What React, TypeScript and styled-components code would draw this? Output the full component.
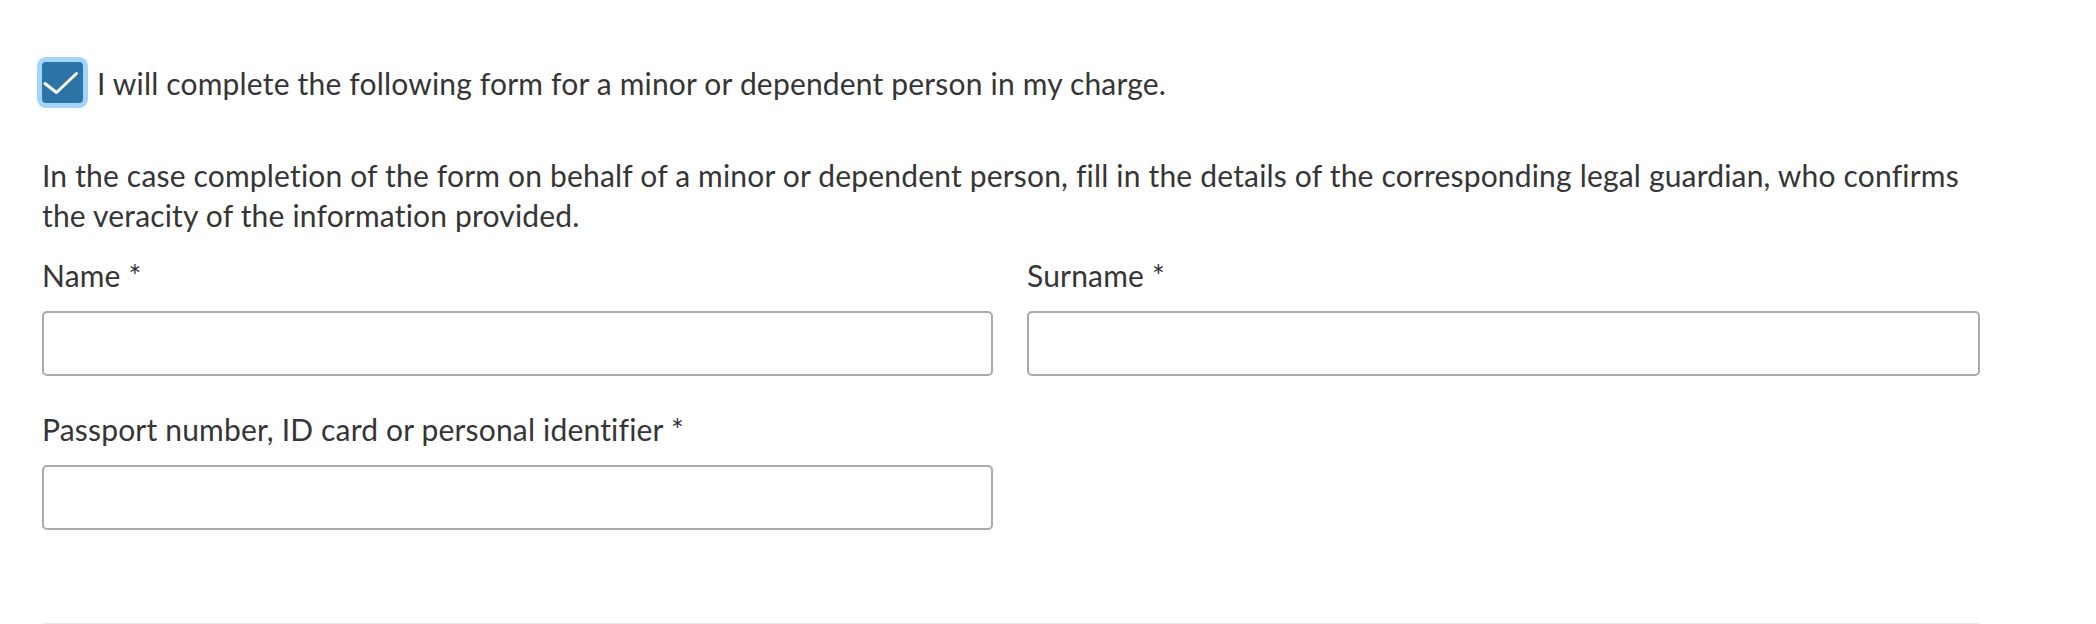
import React, { useState } from 'react';
import styled, { createGlobalStyle } from 'styled-components';

const GlobalStyle = createGlobalStyle`
  html, body {
    margin: 0;
    padding: 0;
    background: #ffffff;
  }
  body {
    font-family: Lato, "Open Sans", sans-serif;
    color: #353535;
    letter-spacing: 0.18px;
  }
`;

const Wrapper = styled.div`
  width: 1938px;
  padding: 62px 0 0 42px;
`;

const CheckRow = styled.label`
  display: flex;
  align-items: center;
  gap: 14px;
  cursor: pointer;
  font-size: 30px;
  line-height: 40px;
`;

const HiddenInput = styled.input`
  position: absolute;
  opacity: 0;
  width: 0;
  height: 0;
`;

const Box = styled.span<{ $checked: boolean }>`
  display: flex;
  align-items: center;
  justify-content: center;
  flex-shrink: 0;
  width: 41px;
  height: 41px;
  border-radius: 4px;
  background: ${(p) => (p.$checked ? '#2c73a6' : '#ffffff')};
  box-shadow: 0 0 0 5px #a3d5fc;
`;

const Intro = styled.p`
  margin: 52px 0 20px;
  font-size: 30px;
  line-height: 40px;
`;

const FieldGrid = styled.div`
  display: grid;
  grid-template-columns: 951px 953px;
  column-gap: 34px;
  row-gap: 33px;
`;

const Field = styled.div`
  display: flex;
  flex-direction: column;
`;

const Label = styled.label`
  font-size: 30px;
  line-height: 40px;
  margin-bottom: 16px;
`;

const TextInput = styled.input`
  box-sizing: border-box;
  height: 65px;
  width: 100%;
  border: 2px solid #aaaaaa;
  border-radius: 5px;
  padding: 0 16px;
  font-size: 30px;
  font-family: inherit;
  color: #353535;
  outline: none;
  &:focus {
    border-color: #2c73a6;
  }
`;

const Divider = styled.div`
  margin-top: 93px;
  height: 3px;
  background: #ededed;
`;

const fields = [
  { id: 'name', label: 'Name *' },
  { id: 'surname', label: 'Surname *' },
  { id: 'document', label: 'Passport number, ID card or personal identifier *' },
];

const App: React.FC = () => {
  const [checked, setChecked] = useState(true);

  return (
    <>
      <GlobalStyle />
      <Wrapper>
        <CheckRow>
          <HiddenInput
            type="checkbox"
            checked={checked}
            onChange={() => setChecked(!checked)}
          />
          <Box $checked={checked}>
            {checked && (
              <svg width="41" height="41" viewBox="0 0 41 41">
                <path
                  d="M3 21.5 L14.5 30.5 L34.5 11.5"
                  fill="none"
                  stroke="#ffffff"
                  strokeWidth="3"
                  strokeLinecap="round"
                  strokeLinejoin="round"
                />
              </svg>
            )}
          </Box>
          I will complete the following form for a minor or dependent person in my charge.
        </CheckRow>
        <Intro>
          In the case completion of the form on behalf of a minor or dependent person, fill in the
          details of the corresponding legal guardian, who confirms the veracity of the information
          provided.
        </Intro>
        <FieldGrid>
          {fields.map((f) => (
            <Field key={f.id}>
              <Label htmlFor={f.id}>{f.label}</Label>
              <TextInput id={f.id} type="text" />
            </Field>
          ))}
        </FieldGrid>
        <Divider />
      </Wrapper>
    </>
  );
};

export default App;
